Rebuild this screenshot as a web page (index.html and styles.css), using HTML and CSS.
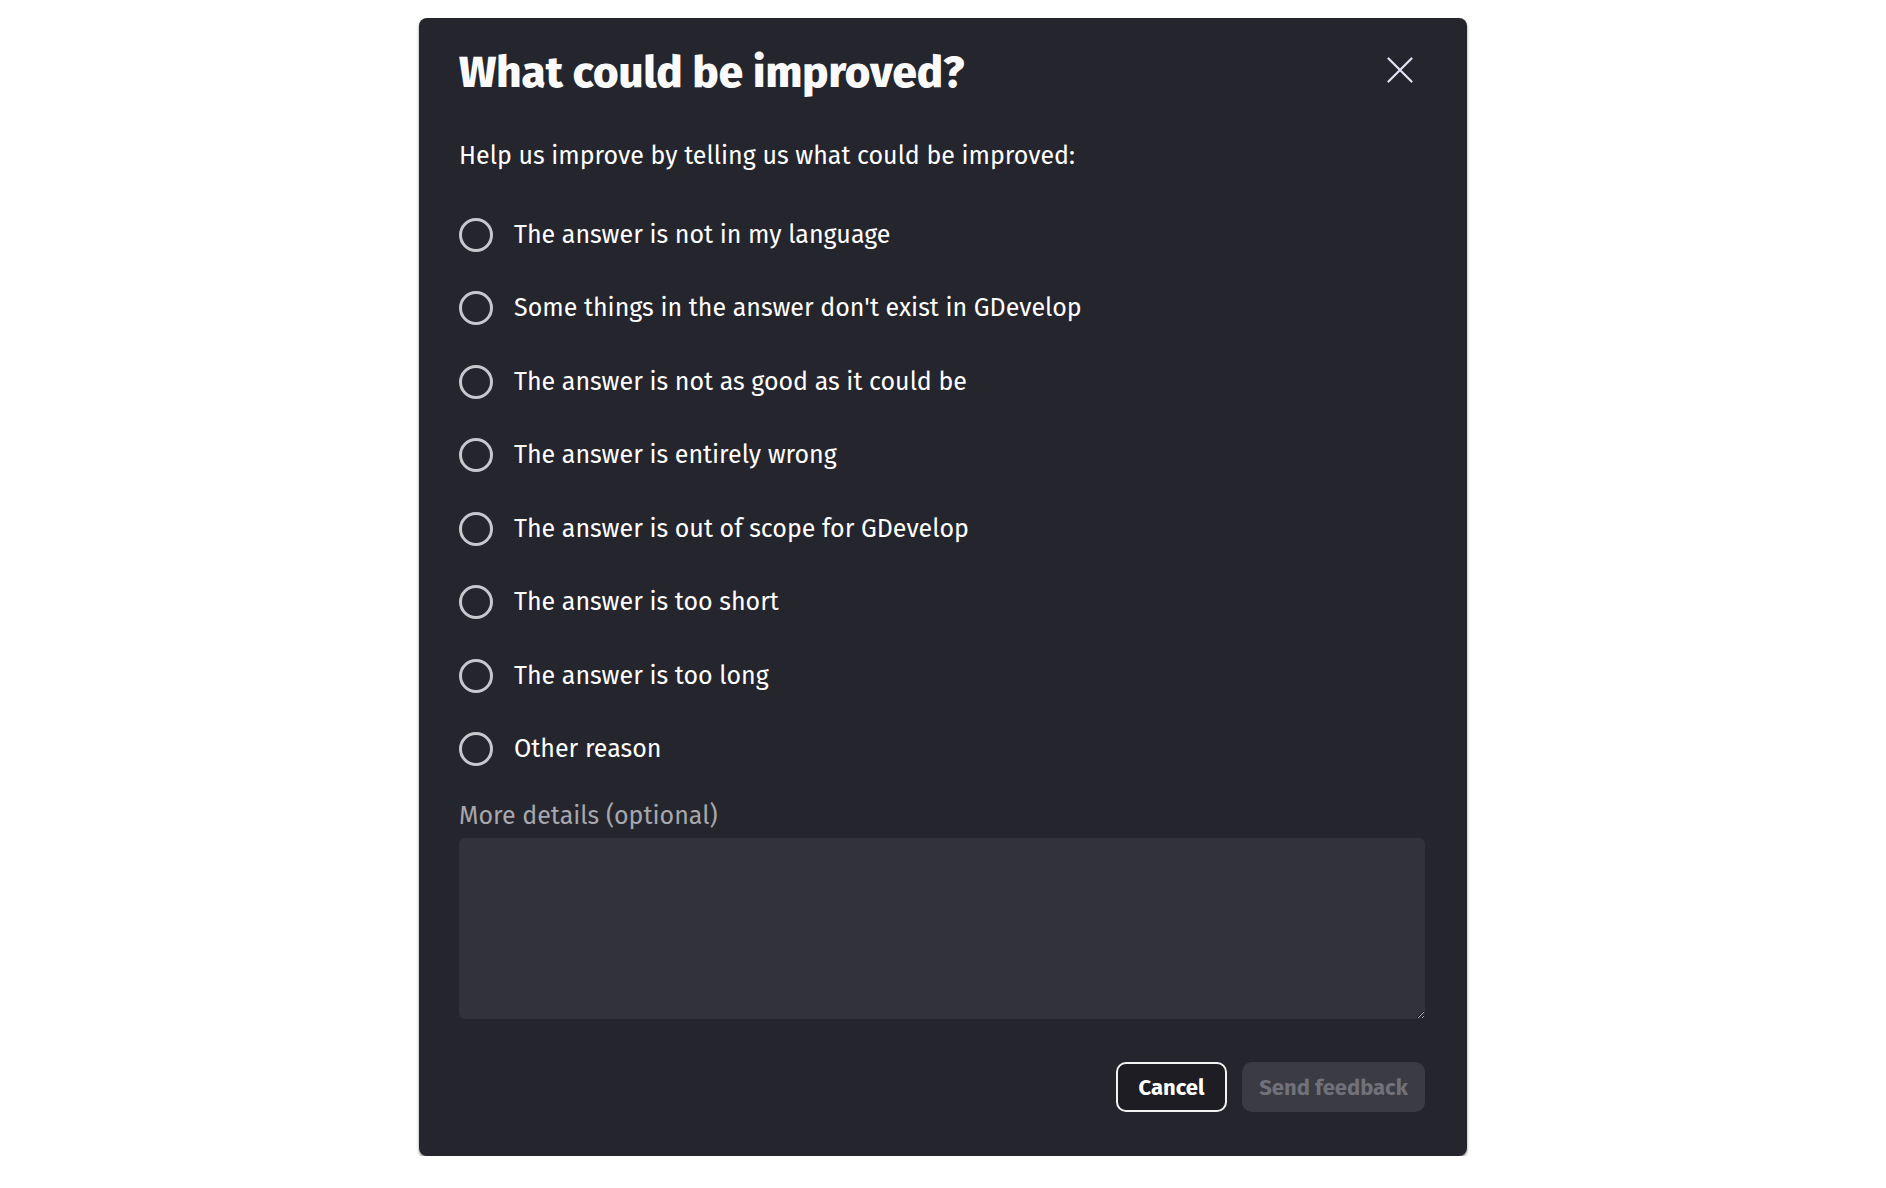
FILE: index.html
```html
<!DOCTYPE html>
<html lang="en">
<head>
<meta charset="utf-8">
<title>What could be improved?</title>
<link rel="stylesheet" href="styles.css">
</head>
<body>
<div class="dialog">
  <div class="header">
    <h1 class="title">What could be improved?</h1>
    <button class="close" aria-label="Close">
      <svg width="26" height="26" viewBox="0 0 26 26"><path d="M1.5 1.5 L24.5 24.5 M24.5 1.5 L1.5 24.5" stroke="#e4e2f4" stroke-width="2.2" stroke-linecap="round" fill="none"/></svg>
    </button>
  </div>
  <p class="subtitle">Help us improve by telling us what could be improved:</p>
  <div class="options">
    <label class="option"><span class="radio"></span><span>The answer is not in my language</span></label>
    <label class="option"><span class="radio"></span><span>Some things in the answer don't exist in GDevelop</span></label>
    <label class="option"><span class="radio"></span><span>The answer is not as good as it could be</span></label>
    <label class="option"><span class="radio"></span><span>The answer is entirely wrong</span></label>
    <label class="option"><span class="radio"></span><span>The answer is out of scope for GDevelop</span></label>
    <label class="option"><span class="radio"></span><span>The answer is too short</span></label>
    <label class="option"><span class="radio"></span><span>The answer is too long</span></label>
    <label class="option"><span class="radio"></span><span>Other reason</span></label>
  </div>
  <div class="field-label">More details (optional)</div>
  <textarea class="details"></textarea>
  <div class="actions">
    <button class="btn btn-cancel">Cancel</button>
    <button class="btn btn-send">Send feedback</button>
  </div>
</div>
</body>
</html>
```

FILE: styles.css
```css
html, body {
  margin: 0;
  padding: 0;
  background: #ffffff;
}

body {
  font-family: "Fira Sans", "Open Sans", "Noto Sans", sans-serif;
}

.dialog {
  box-sizing: border-box;
  width: 1048px;
  margin: 18px auto 0;
  padding: 24px 42px 44px 40px;
  background: #25252d;
  border-radius: 8px;
  box-shadow: 0 2px 3px rgba(0, 0, 0, 0.45);
  color: #ffffff;
  display: flex;
  flex-direction: column;
}

.header {
  height: 56px;
  display: flex;
  align-items: center;
  justify-content: space-between;
}

.title {
  margin: 0;
  padding-top: 5px;
  font-size: 43.8px;
  font-weight: 800;
  line-height: 56px;
  color: #fafafa;
  letter-spacing: 0;
}

.close {
  width: 40px;
  height: 40px;
  margin-right: 5px;
  padding: 0;
  border: none;
  background: transparent;
  display: flex;
  align-items: center;
  justify-content: center;
}

.subtitle {
  margin: 42px 0 0;
  font-size: 25px;
  line-height: 32px;
  color: #ffffff;
}

.options {
  margin-top: 26px;
  display: flex;
  flex-direction: column;
}

.option {
  height: 73.5px;
  display: flex;
  align-items: center;
  gap: 21px;
  font-size: 25px;
  color: #ffffff;
}

.radio {
  box-sizing: border-box;
  width: 34px;
  height: 34px;
  flex: none;
  border: 3px solid #c8c8cc;
  border-radius: 50%;
}

.field-label {
  margin-top: 16px;
  font-size: 25px;
  line-height: 28px;
  color: #a7a7ae;
}

.details {
  box-sizing: border-box;
  display: block;
  width: 100%;
  height: 181px;
  margin-top: 8px;
  border: none;
  border-radius: 6px;
  background: #32323b;
  color: #ffffff;
  font: inherit;
  outline: none;
}

.actions {
  margin-top: 43px;
  display: flex;
  justify-content: flex-end;
  gap: 15px;
}

.btn {
  height: 50px;
  border-radius: 10px;
  font-family: inherit;
  font-size: 22px;
  font-weight: 700;
  padding: 0;
}

.btn-cancel {
  width: 111px;
  background: #1d1d23;
  border: 2px solid #f2f2f2;
  color: #ffffff;
}

.btn-send {
  width: 183px;
  background: #3b3b44;
  border: none;
  color: #71717a;
}
```
